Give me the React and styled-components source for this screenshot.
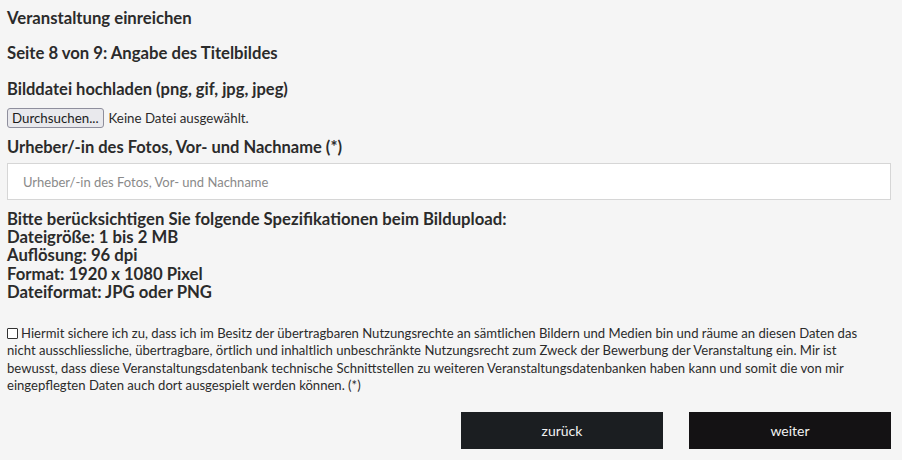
import React from "react";
import styled, { createGlobalStyle } from "styled-components";

const Global = createGlobalStyle`
  html, body { margin: 0; padding: 0; background: #f5f5f5; }
  body { font-family: Lato, "Open Sans", sans-serif; color: #2b2b2b; }
  * { box-sizing: border-box; }
`;

const Page = styled.form`
  padding: 6px 11px 0 7px;
  display: flex;
  flex-direction: column;
`;

const Heading = styled.h2`
  margin: 0;
  font-size: ${(p) => p.$size || 16.7}px;
  font-weight: 700;
  line-height: 24px;
  color: #2b2b2b;
  margin-top: ${(p) => p.$mt || 0}px;
  margin-bottom: ${(p) => p.$mb || 0}px;
`;

const FileRow = styled.div`
  display: flex;
  align-items: center;
  gap: 5px;
  height: 20px;
  margin-top: 7px;
  font-size: 13.3px;
  color: #2b2b2b;
`;

const FileButton = styled.button`
  font-family: Lato, sans-serif;
  font-size: 13.3px;
  height: 20px;
  padding: 0 4px;
  background: #e9e9ed;
  border: 1px solid #8f8f9d;
  border-radius: 3px;
  color: #1b1b1b;
`;

const TextInput = styled.input`
  width: 100%;
  height: 37px;
  border: 1px solid #d6d6d6;
  background: #fff;
  padding: 0 15px;
  font-family: Lato, sans-serif;
  font-size: 13px;
  color: #333;
  &::placeholder { color: #8a8a8a; }
`;

const Specs = styled.div`
  margin-top: 10px;
  font-size: 16.7px;
  font-weight: 700;
  line-height: 18.2px;
  color: #2b2b2b;
`;

const Consent = styled.label`
  display: block;
  margin-top: 24px;
  padding-right: 14px;
  font-size: 13.1px;
  line-height: 17.4px;
  color: #2b2b2b;
`;

const Box = styled.span`
  display: inline-block;
  width: 11px;
  height: 11px;
  border: 1px solid #333;
  border-radius: 1px;
  margin-right: 3px;
  vertical-align: -1px;
  background: #fff;
`;

const Actions = styled.div`
  display: flex;
  justify-content: flex-end;
  gap: 26px;
  margin-top: 17px;
`;

const ActionButton = styled.button`
  width: 202px;
  height: 37px;
  border: none;
  background: ${(p) => (p.$primary ? "#141214" : "#1b1e21")};
  color: #f2f2f2;
  font-family: Lato, sans-serif;
  font-size: 14px;
`;

export default function App() {
  return (
    <>
      <Global />
      <Page onSubmit={(e) => e.preventDefault()}>
        <Heading $mb={11}>Veranstaltung einreichen</Heading>
        <Heading $mb={12}>Seite 8 von 9: Angabe des Titelbildes</Heading>
        <Heading $size={16.5}>Bilddatei hochladen (png, gif, jpg, jpeg)</Heading>
        <FileRow>
          <FileButton type="button">Durchsuchen...</FileButton>
          <span>Keine Datei ausgewählt.</span>
        </FileRow>
        <Heading $size={16.5} $mt={7} $mb={4}>
          Urheber/-in des Fotos, Vor- und Nachname (*)
        </Heading>
        <TextInput placeholder="Urheber/-in des Fotos, Vor- und Nachname" />
        <Specs>
          Bitte berücksichtigen Sie folgende Spezifikationen beim Bildupload:
          <br />
          Dateigröße: 1 bis 2 MB
          <br />
          Auflösung: 96 dpi
          <br />
          Format: 1920 x 1080 Pixel
          <br />
          Dateiformat: JPG oder PNG
        </Specs>
        <Consent>
          <Box />
          Hiermit sichere ich zu, dass ich im Besitz der übertragbaren Nutzungsrechte an sämtlichen Bildern und Medien bin und räume an diesen Daten das nicht ausschliessliche, übertragbare, örtlich und inhaltlich unbeschränkte Nutzungsrecht zum Zweck der Bewerbung der Veranstaltung ein. Mir ist bewusst, dass diese Veranstaltungsdatenbank technische Schnittstellen zu weiteren Veranstaltungsdatenbanken haben kann und somit die von mir eingepflegten Daten auch dort ausgespielt werden können. (*)
        </Consent>
        <Actions>
          <ActionButton type="button">zurück</ActionButton>
          <ActionButton type="button" $primary>weiter</ActionButton>
        </Actions>
      </Page>
    </>
  );
}
